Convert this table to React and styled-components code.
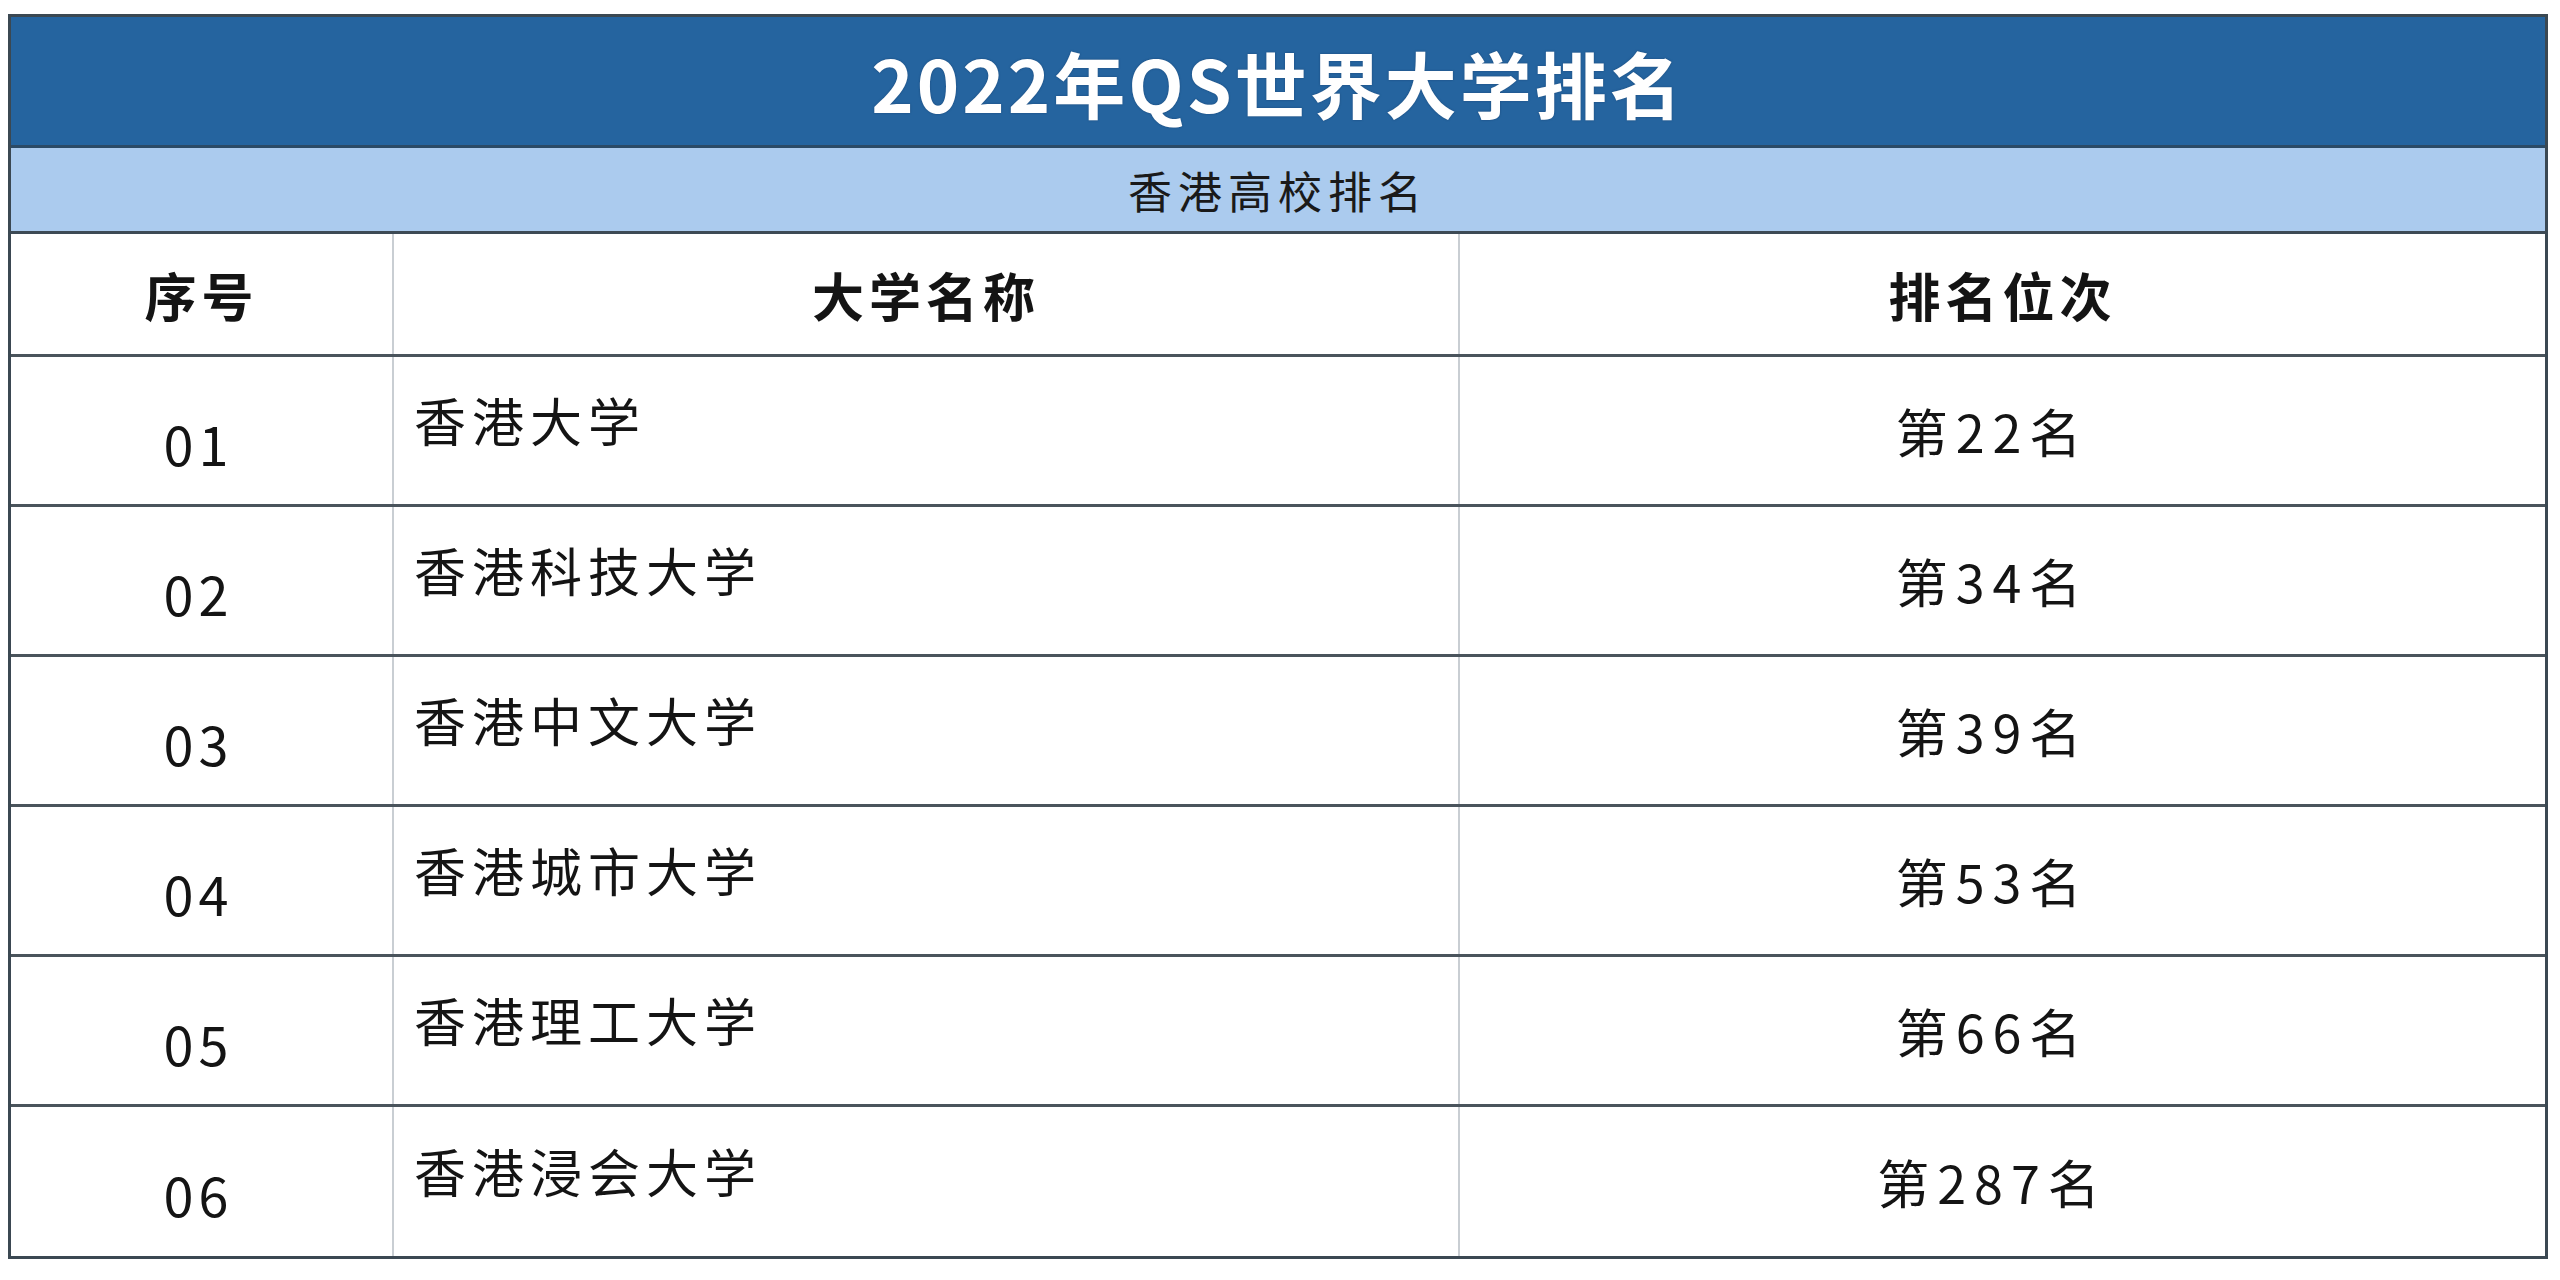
import styled, { createGlobalStyle } from 'styled-components';

const GlobalStyle = createGlobalStyle`
    html, body {
        margin: 0;
        padding: 0;
        background: #ffffff;
    }
    body {
        font-family: "Noto Sans CJK SC", "Noto Sans", sans-serif;
        color: #151515;
    }
`;

const Page = styled.div`
    padding: 14px 12px 20px 8px;
`;

const Table = styled.div`
    width: 2540px;
    box-sizing: border-box;
    border: 3px solid #3b4852;
    display: flex;
    flex-direction: column;
`;

const TitleBar = styled.div`
    height: 128px;
    background: #25649f;
    border-bottom: 3px solid #2b4a66;
    display: flex;
    align-items: center;
    justify-content: center;
    color: #ffffff;
    font-size: 72px;
    font-weight: 700;
    letter-spacing: 3px;
    text-shadow: 0 0 2px rgba(20, 50, 90, 0.6);
`;

const SubBar = styled.div`
    height: 83px;
    background: #abcbee;
    border-bottom: 3px solid #3d4a55;
    display: flex;
    align-items: center;
    justify-content: center;
    font-size: 44px;
    letter-spacing: 6px;
    color: #1a1a1a;
`;

const Row = styled.div`
    display: grid;
    grid-template-columns: 381px 1066px 1fr;
    height: ${p => p.$height}px;
    border-bottom: ${p => (p.$last ? 'none' : '3px solid #4a545c')};
`;

const Cell = styled.div`
    display: flex;
    align-items: center;
    justify-content: ${p => (p.$left ? 'flex-start' : 'center')};
    padding-left: ${p => (p.$left ? '20px' : '0')};
    padding-right: ${p => p.$padRight || 0}px;
    border-left: ${p => (p.$first ? 'none' : '2px solid #c9ced3')};
    font-size: ${p => p.$size || 52}px;
    font-weight: ${p => (p.$bold ? 700 : 400)};
    letter-spacing: ${p => p.$spacing ?? 6}px;
    color: #141414;
`;

const CellText = styled.span`
    display: inline-block;
    transform: translateY(${p => p.$shift || 0}px);
`;

const rows = [
    { no: '01', name: '香港大学', rank: '第22名' },
    { no: '02', name: '香港科技大学', rank: '第34名' },
    { no: '03', name: '香港中文大学', rank: '第39名' },
    { no: '04', name: '香港城市大学', rank: '第53名' },
    { no: '05', name: '香港理工大学', rank: '第66名' },
    { no: '06', name: '香港浸会大学', rank: '第287名' },
];

export default function App() {
    return (
        <Page>
            <GlobalStyle />
            <Table>
                <TitleBar>2022年QS世界大学排名</TitleBar>
                <SubBar>香港高校排名</SubBar>
                <Row $height={120}>
                    <Cell $first $bold $size={52} $spacing={5}>序号</Cell>
                    <Cell $bold $size={52} $spacing={5}>大学名称</Cell>
                    <Cell $bold $size={52} $spacing={5}>排名位次</Cell>
                </Row>
                {rows.map((r, i) => (
                    <Row key={r.no} $height={i === rows.length - 1 ? 149 : 147} $last={i === rows.length - 1}>
                        <Cell $first $size={54} $spacing={5} $padRight={6}>
                            <CellText $shift={12}>{r.no}</CellText>
                        </Cell>
                        <Cell $left>
                            <CellText $shift={-11}>{r.name}</CellText>
                        </Cell>
                        <Cell $spacing={8} $padRight={20}>
                            <CellText>{r.rank}</CellText>
                        </Cell>
                    </Row>
                ))}
            </Table>
        </Page>
    );
}
